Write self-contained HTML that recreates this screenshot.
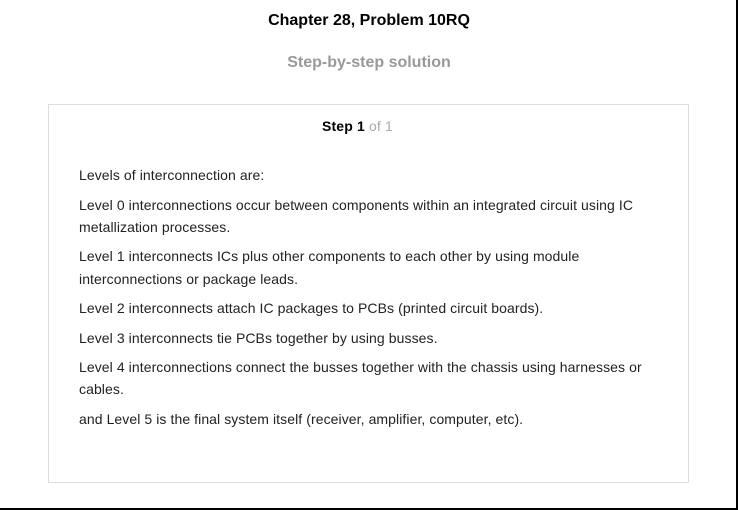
<!DOCTYPE html>
<html><head><style>
html,body{margin:0;padding:0;}
body{width:738px;height:510px;position:relative;background:#fff;font-family:"Liberation Sans",Arial,sans-serif;overflow:hidden;}
.rb{position:absolute;left:736px;top:0;width:2px;height:510px;background:#000;}
.bb{position:absolute;left:0;top:508px;width:738px;height:2px;background:#000;}
.t{position:absolute;white-space:nowrap;}
.h1{left:0;width:738px;text-align:center;top:12px;font-size:16px;font-weight:bold;color:#000;}
.h2{left:0;width:738px;text-align:center;top:54px;font-size:16px;font-weight:bold;color:#999;}
.box{position:absolute;left:48px;top:104px;width:639px;height:377px;border:1px solid #ddd;}
.st{left:322px;top:118px;font-size:14px;letter-spacing:0.15px;}
.p{left:79px;font-size:14px;color:#222;letter-spacing:0.08px;}
</style></head><body>
<div class="t h1">Chapter 28, Problem 10RQ</div>
<div class="t h2">Step-by-step solution</div>
<div class="box"></div>
<div class="t st"><b>Step 1</b> <span style="color:#aaa">of 1</span></div>
<div class="t p" style="top:167px">Levels of interconnection are:</div>
<div class="t p" style="top:197px">Level 0 interconnections occur between components within an integrated circuit using IC</div>
<div class="t p" style="top:219px">metallization processes.</div>
<div class="t p" style="top:248px">Level 1 interconnects ICs plus other components to each other by using module</div>
<div class="t p" style="top:271px">interconnections or package leads.</div>
<div class="t p" style="top:300px">Level 2 interconnects attach IC packages to PCBs (printed circuit boards).</div>
<div class="t p" style="top:330px">Level 3 interconnects tie PCBs together by using busses.</div>
<div class="t p" style="top:359px">Level 4 interconnections connect the busses together with the chassis using harnesses or</div>
<div class="t p" style="top:381px">cables.</div>
<div class="t p" style="top:411px">and Level 5 is the final system itself (receiver, amplifier, computer, etc).</div>
<div class="rb"></div><div class="bb"></div>
</body></html>
